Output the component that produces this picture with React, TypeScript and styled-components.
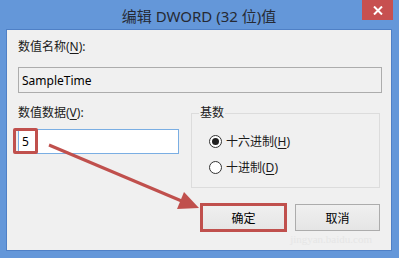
import React from "react";
import styled, { createGlobalStyle } from "styled-components";

const GlobalStyle = createGlobalStyle`
  html, body {
    margin: 0;
    padding: 0;
    background: #6497d9;
  }
  body {
    font-family: "Noto Sans", "Noto Sans CJK SC", sans-serif;
  }
`;

const Window = styled.div`
  position: relative;
  width: 399px;
  height: 258px;
  box-sizing: border-box;
  background: #6497d9;
  display: flex;
  flex-direction: column;
  padding: 0 7px 7px 6px;
  overflow: hidden;
`;

const TitleBar = styled.div`
  height: 29px;
  display: grid;
  grid-template-columns: 1fr auto 1fr;
  align-items: start;
`;

const Title = styled.div`
  grid-column: 2;
  font-size: 15px;
  line-height: 20px;
  padding-top: 6px;
  color: #262a33;
  white-space: nowrap;
`;

const CloseButton = styled.div`
  grid-column: 3;
  justify-self: end;
  margin-right: -1px;
  width: 31px;
  height: 20px;
  background: #c75050;
  color: #fff;
  display: flex;
  align-items: center;
  justify-content: center;
`;

const Content = styled.div`
  flex: 1;
  background: #f0f0f0;
  border: 1px solid #4f80c6;
  display: flex;
  flex-direction: column;
  padding: 9px 9px 0 11px;
  font-size: 12px;
  color: #1a1a1a;
`;

const Label = styled.div`
  height: 16px;
  line-height: 16px;
  white-space: nowrap;
`;

const Key = styled.span`
  text-decoration: underline;
  text-underline-offset: 2px;
`;

const TextBox = styled.div<{ $readOnly?: boolean; $width?: number }>`
  box-sizing: border-box;
  height: ${(p) => (p.$readOnly ? 26 : 25)}px;
  width: ${(p) => (p.$width ? `${p.$width}px` : "auto")};
  margin-top: ${(p) => (p.$readOnly ? 12 : 8)}px;
  border: 1px solid ${(p) => (p.$readOnly ? "#acacac" : "#7aaee3")};
  background: ${(p) => (p.$readOnly ? "#f0f0f0" : "#ffffff")};
  padding-left: 3px;
  display: flex;
  align-items: center;
  font-size: 12px;
  color: #000;
  position: relative;
`;

const Mark = styled.div`
  position: absolute;
  left: -6px;
  top: -2px;
  width: 25px;
  height: 26px;
  box-sizing: border-box;
  border: 3px solid #c0504d;
  border-radius: 2px;
`;

const Row = styled.div`
  display: flex;
  gap: 12px;
  margin-top: 12px;
`;

const Column = styled.div`
  display: flex;
  flex-direction: column;
  width: 161px;
`;

const Group = styled.fieldset`
  margin: 0;
  box-sizing: border-box;
  width: 189px;
  height: 83px;
  border: 1px solid #dcdcdc;
  padding: 12px 0 0 17px;
  display: flex;
  flex-direction: column;
  gap: 10px;
`;

const Legend = styled.legend`
  padding: 0 1px;
  margin-left: -10px;
  font-size: 12px;
  line-height: 16px;
`;

const RadioRow = styled.div`
  display: flex;
  align-items: center;
  gap: 4px;
  height: 16px;
  white-space: nowrap;
`;

const RadioCircle = styled.span<{ $checked?: boolean }>`
  box-sizing: border-box;
  width: 13px;
  height: 13px;
  border-radius: 50%;
  border: 1px solid #333;
  background: #fff;
  display: flex;
  align-items: center;
  justify-content: center;
  &::after {
    content: "";
    width: 7px;
    height: 7px;
    border-radius: 50%;
    background: ${(p) => (p.$checked ? "#1f1f1f" : "transparent")};
  }
`;

const ButtonRow = styled.div`
  display: flex;
  justify-content: flex-end;
  gap: 9px;
  margin-top: 16px;
  margin-right: 2px;
`;

const Button = styled.div<{ $marked?: boolean }>`
  box-sizing: border-box;
  width: 85px;
  height: 27px;
  border: 1px solid #acacac;
  background: linear-gradient(#f0f0f0, #e5e5e5);
  display: flex;
  align-items: center;
  justify-content: center;
  font-size: 12px;
  color: #000;
  outline: ${(p) => (p.$marked ? "3px solid #c0504d" : "none")};
  outline-offset: -2px;
`;

const Watermark = styled.div`
  align-self: flex-end;
  margin-right: 10px;
  margin-top: 2px;
  font-family: "Liberation Serif", serif;
  font-size: 11px;
  color: #e6e6e6;
`;

const Arrow = styled.svg`
  position: absolute;
  left: 0;
  top: 0;
  pointer-events: none;
`;

export default function App() {
  return (
    <>
      <GlobalStyle />
      <Window>
        <TitleBar>
          <Title>编辑 DWORD (32 位)值</Title>
          <CloseButton>
            <svg width="10" height="9" viewBox="0 0 10 9">
              <path d="M1 0.5 L9 8.5 M9 0.5 L1 8.5" stroke="#fff" strokeWidth="2" />
            </svg>
          </CloseButton>
        </TitleBar>
        <Content>
          <Label>
            数值名称(<Key>N</Key>):
          </Label>
          <TextBox $readOnly>SampleTime</TextBox>
          <Row>
            <Column>
              <Label>
                数值数据(<Key>V</Key>):
              </Label>
              <TextBox $width={161}>
                5
                <Mark />
              </TextBox>
            </Column>
            <Group>
              <Legend>基数</Legend>
              <RadioRow>
                <RadioCircle $checked />
                <span>
                  十六进制(<Key>H</Key>)
                </span>
              </RadioRow>
              <RadioRow>
                <RadioCircle />
                <span>
                  十进制(<Key>D</Key>)
                </span>
              </RadioRow>
            </Group>
          </Row>
          <ButtonRow>
            <Button $marked>确定</Button>
            <Button>取消</Button>
          </ButtonRow>
          <Watermark>jingyan.baidu.com</Watermark>
        </Content>
        <Arrow width="399" height="258" viewBox="0 0 399 258">
          <line x1="49" y1="145" x2="184" y2="202" stroke="#c0504d" strokeWidth="3" />
          <polygon points="199,208 177,209 184,192" fill="#c0504d" />
        </Arrow>
      </Window>
    </>
  );
}
